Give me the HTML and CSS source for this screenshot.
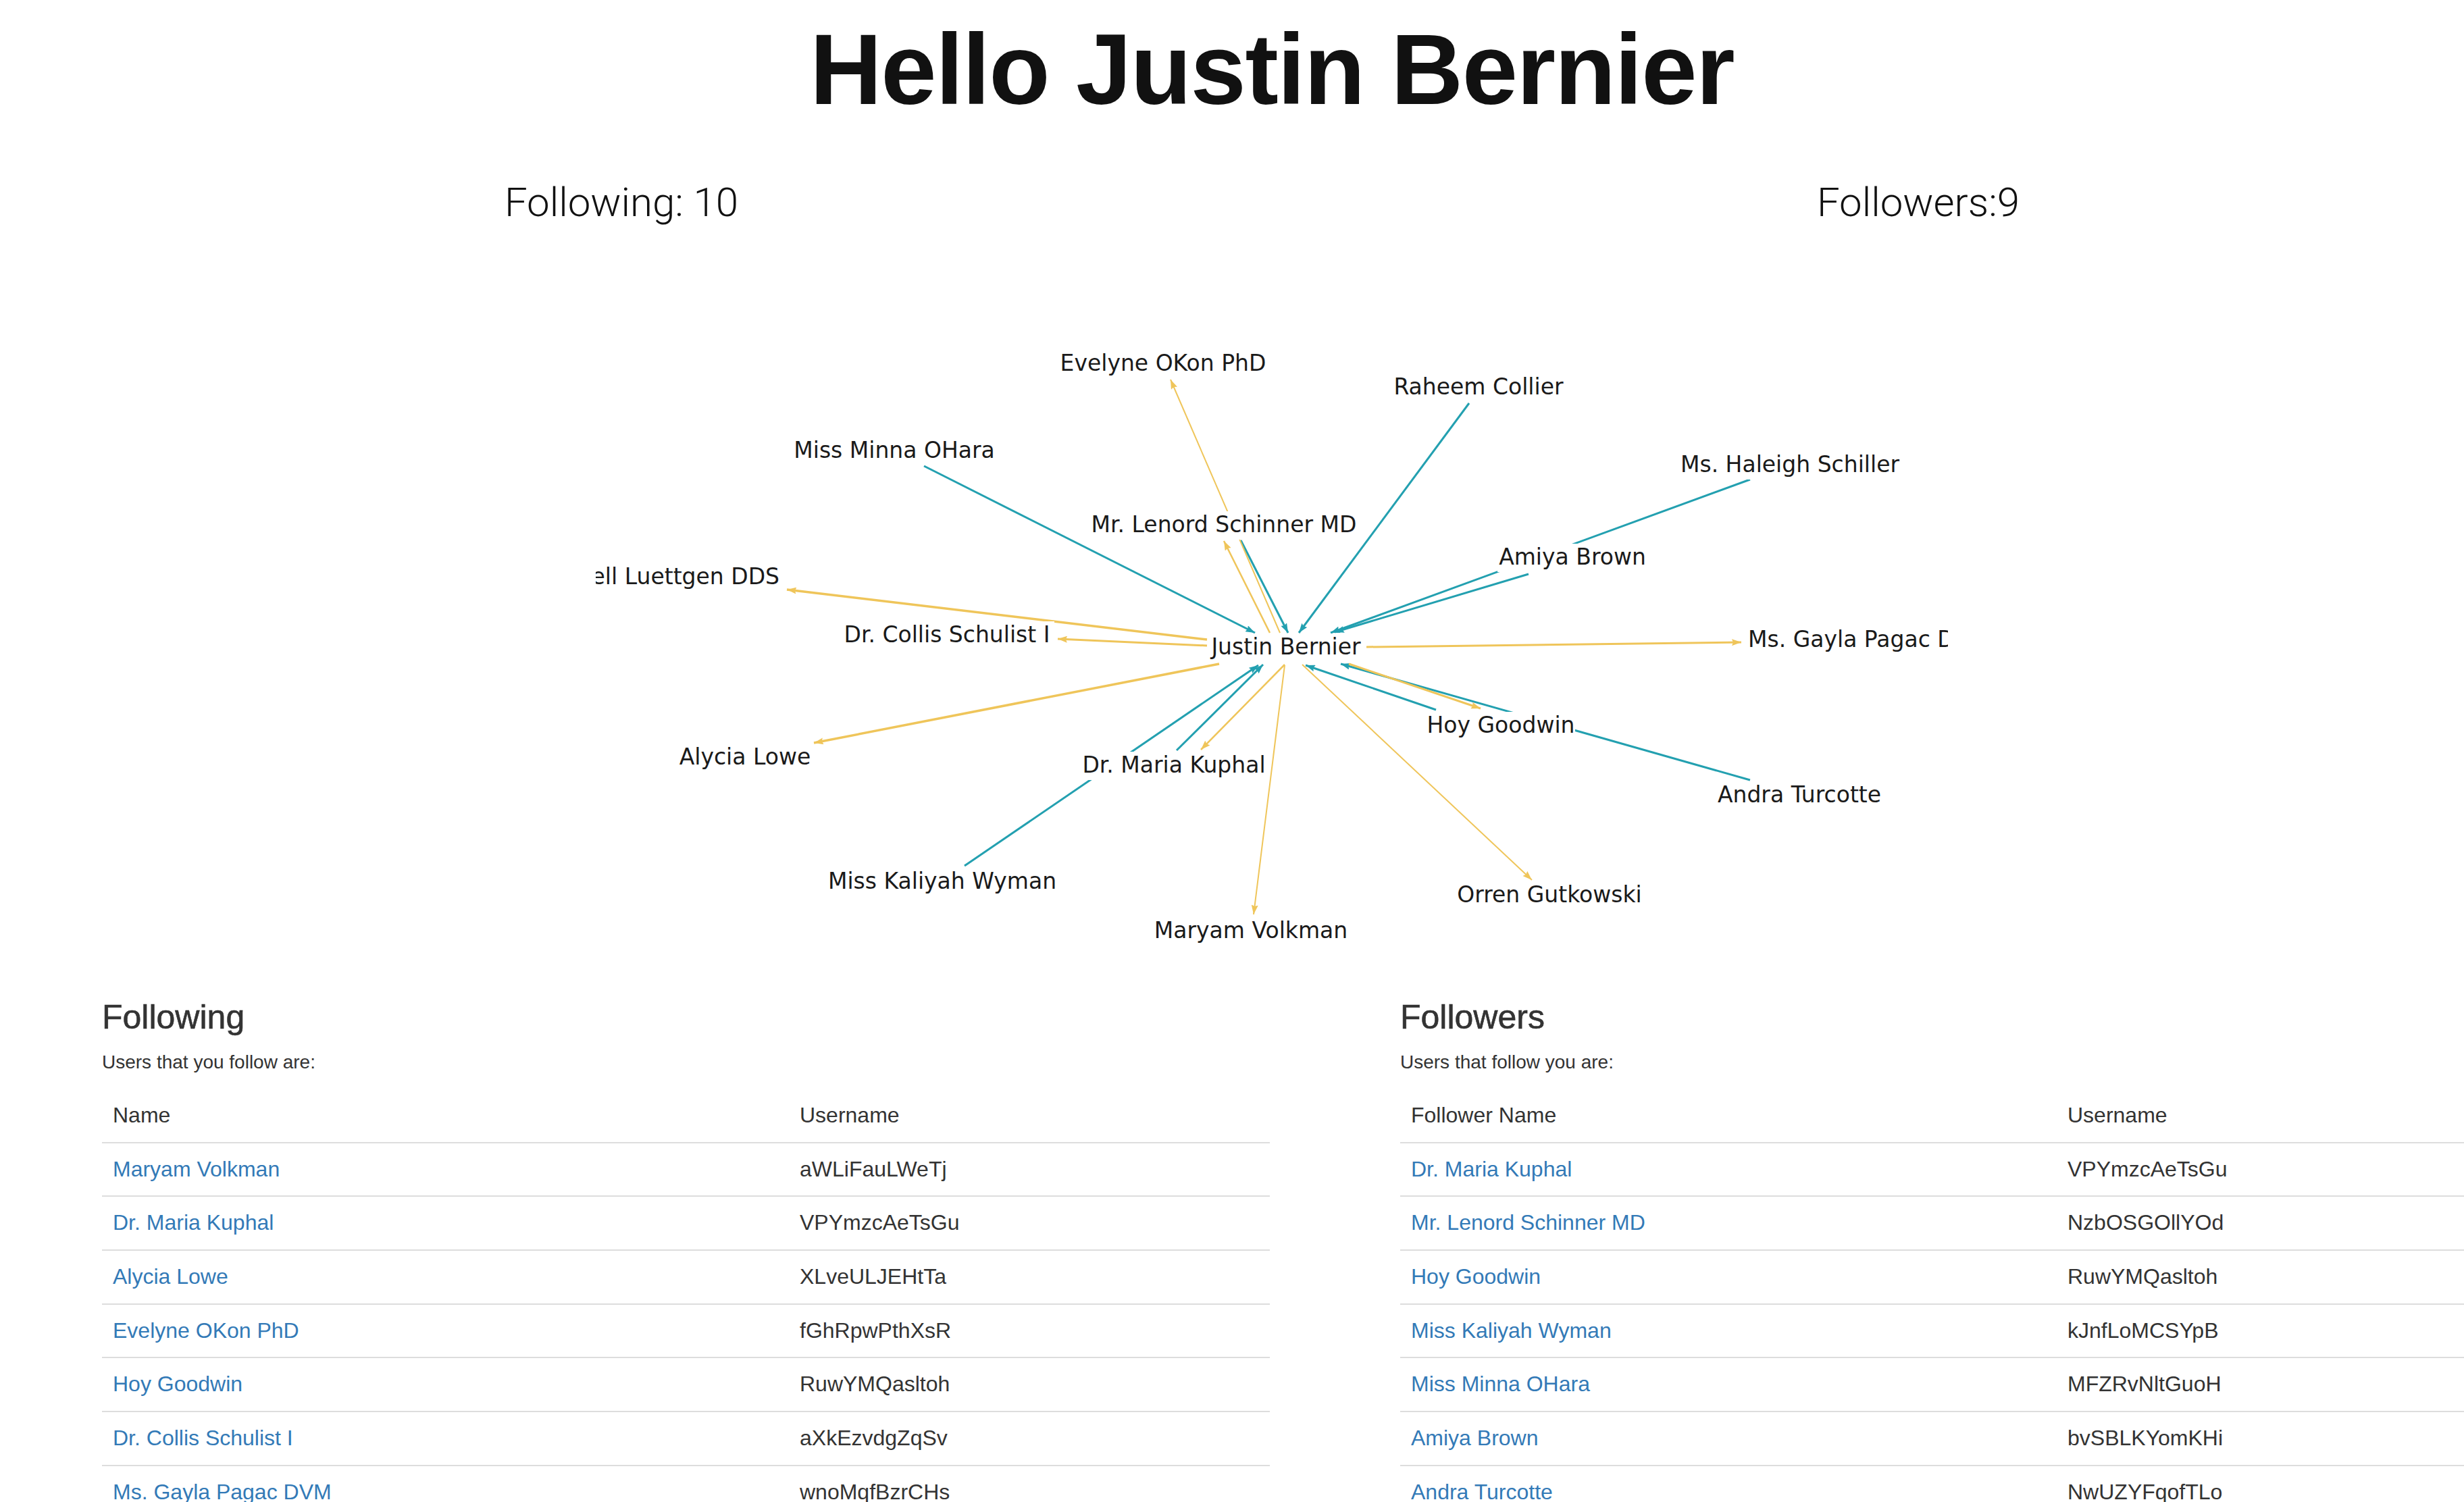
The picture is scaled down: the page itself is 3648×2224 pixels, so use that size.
FILE: index.html
```html
<!DOCTYPE html>
<html>
<head>
<meta charset="utf-8">
<title>Hello Justin Bernier</title>
<link rel="stylesheet" href="styles.css">
</head>
<body>
<h1 class="title">Hello Justin Bernier</h1>

<div class="stats">
  <div class="stat stat-left">Following: 10</div>
  <div class="stat stat-right">Followers:9</div>
</div>

<svg class="graph" width="2002" height="1000" viewBox="0 0 2002 1000" xmlns="http://www.w3.org/2000/svg">
  <defs>
    <marker id="arr-t" viewBox="0 0 14 10" refX="14" refY="5" markerWidth="14" markerHeight="10" markerUnits="userSpaceOnUse" orient="auto">
      <path d="M0,0 L14,5 L0,10 L2,5 z" class="head-t"/>
    </marker>
    <marker id="arr-y" viewBox="0 0 14 10" refX="14" refY="5" markerWidth="14" markerHeight="10" markerUnits="userSpaceOnUse" orient="auto">
      <path d="M0,0 L14,5 L0,10 L2,5 z" class="head-y"/>
    </marker>
  </defs>

  <!-- followers -> Justin (teal) -->
  <g class="edges-t">
    <line x1="486" y1="250" x2="976" y2="497"/>
    <line x1="955" y1="360" x2="1025" y2="497"/>
    <line x1="1293" y1="157" x2="1041" y2="497"/>
    <line x1="1709" y1="270" x2="1088" y2="497"/>
    <line x1="1381" y1="410" x2="1094" y2="496"/>
    <line x1="860" y1="671" x2="988" y2="544"/>
    <line x1="546" y1="842" x2="981" y2="545"/>
    <line x1="1244" y1="611" x2="1051" y2="545"/>
    <line x1="1709" y1="715" x2="1103" y2="543"/>
  </g>

  <!-- Justin -> following (yellow) -->
  <g class="edges-y">
    <line class="w25" x1="998" y1="497" x2="930" y2="361"/>
    <line class="w2" x1="1013" y1="497" x2="851" y2="122"/>
    <line class="w35" x1="905" y1="507" x2="283" y2="433"/>
    <line class="w3" x1="905" y1="516" x2="684" y2="506"/>
    <line class="w3" x1="1141" y1="518" x2="1696" y2="511"/>
    <line class="w35" x1="923" y1="543" x2="323" y2="660"/>
    <line class="w25" x1="1020" y1="544" x2="896" y2="670"/>
    <line class="w2" x1="1020" y1="545" x2="974" y2="914"/>
    <line class="w2" x1="1046" y1="544" x2="1386" y2="863"/>
    <line class="w3" x1="1115" y1="543" x2="1310" y2="609"/>
  </g>

  <!-- label backgrounds -->
  <g class="lbl-bg">
    <rect x="906" y="498" width="234" height="42"/>
    <rect x="685" y="78" width="309" height="42"/>
    <rect x="1181" y="113" width="253" height="42"/>
    <rect x="294" y="207" width="297" height="42"/>
    <rect x="1605" y="228" width="326" height="42"/>
    <rect x="731" y="317" width="399" height="42"/>
    <rect x="1335" y="365" width="221" height="42"/>
    <rect x="362" y="480" width="317" height="42"/>
    <rect x="1700" y="487" width="400" height="42"/>
    <rect x="1229" y="614" width="221" height="42"/>
    <rect x="121" y="661" width="199" height="42"/>
    <rect x="716" y="673" width="280" height="42"/>
    <rect x="1657" y="717" width="250" height="42"/>
    <rect x="344" y="845" width="338" height="42"/>
    <rect x="1273" y="865" width="278" height="42"/>
    <rect x="826" y="918" width="288" height="42"/>
  </g>

  <!-- labels -->
  <g class="lbl">
    <text x="1022" y="529">Justin Bernier</text>
    <text x="840" y="109">Evelyne OKon PhD</text>
    <text x="1307" y="144">Raheem Collier</text>
    <text x="442" y="238">Miss Minna OHara</text>
    <text x="1768" y="259">Ms. Haleigh Schiller</text>
    <text x="930" y="348">Mr. Lenord Schinner MD</text>
    <text x="1446" y="396">Amiya Brown</text>
    <text class="end" x="272" y="425">Ms. Ardell Luettgen DDS</text>
    <text x="520" y="511">Dr. Collis Schulist I</text>
    <text class="start" x="1706" y="518">Ms. Gayla Pagac DVM</text>
    <text x="1340" y="645">Hoy Goodwin</text>
    <text x="221" y="692">Alycia Lowe</text>
    <text x="856" y="704">Dr. Maria Kuphal</text>
    <text x="1782" y="748">Andra Turcotte</text>
    <text x="513" y="876">Miss Kaliyah Wyman</text>
    <text x="1412" y="896">Orren Gutkowski</text>
    <text x="970" y="949">Maryam Volkman</text>
  </g>
</svg>

<div class="lists">
  <section class="list following">
    <h3 class="list-title">Following</h3>
    <p class="list-desc">Users that you follow are:</p>
    <table class="tbl">
      <thead>
        <tr><th class="col-name">Name</th><th>Username</th></tr>
      </thead>
      <tbody>
        <tr><td><a href="#">Maryam Volkman</a></td><td>aWLiFauLWeTj</td></tr>
        <tr><td><a href="#">Dr. Maria Kuphal</a></td><td>VPYmzcAeTsGu</td></tr>
        <tr><td><a href="#">Alycia Lowe</a></td><td>XLveULJEHtTa</td></tr>
        <tr><td><a href="#">Evelyne OKon PhD</a></td><td>fGhRpwPthXsR</td></tr>
        <tr><td><a href="#">Hoy Goodwin</a></td><td>RuwYMQasltoh</td></tr>
        <tr><td><a href="#">Dr. Collis Schulist I</a></td><td>aXkEzvdgZqSv</td></tr>
        <tr><td><a href="#">Ms. Gayla Pagac DVM</a></td><td>wnoMqfBzrCHs</td></tr>
      </tbody>
    </table>
  </section>
  <section class="list followers">
    <h3 class="list-title">Followers</h3>
    <p class="list-desc">Users that follow you are:</p>
    <table class="tbl">
      <thead>
        <tr><th class="col-name">Follower Name</th><th>Username</th></tr>
      </thead>
      <tbody>
        <tr><td><a href="#">Dr. Maria Kuphal</a></td><td>VPYmzcAeTsGu</td></tr>
        <tr><td><a href="#">Mr. Lenord Schinner MD</a></td><td>NzbOSGOllYOd</td></tr>
        <tr><td><a href="#">Hoy Goodwin</a></td><td>RuwYMQasltoh</td></tr>
        <tr><td><a href="#">Miss Kaliyah Wyman</a></td><td>kJnfLoMCSYpB</td></tr>
        <tr><td><a href="#">Miss Minna OHara</a></td><td>MFZRvNltGuoH</td></tr>
        <tr><td><a href="#">Amiya Brown</a></td><td>bvSBLKYomKHi</td></tr>
        <tr><td><a href="#">Andra Turcotte</a></td><td>NwUZYFqofTLo</td></tr>
      </tbody>
    </table>
  </section>
</div>
</body>
</html>
```
FILE: styles.css
```css
html {
  overflow: hidden;
  background: #fff;
}

body {
  margin: 0;
  width: 3766px;
  font-family: "Liberation Sans", Arial, sans-serif;
  color: #333;
  background: #fff;
}

.title {
  margin: 21px 0 0;
  font-family: "Liberation Sans", Arial, sans-serif;
  font-weight: 700;
  font-size: 148px;
  line-height: 163px;
  letter-spacing: -1.5px;
  text-align: center;
  color: #111;
}

.stats {
  display: grid;
  grid-template-columns: 1840px 2000px;
  margin-top: 80px;
  font-family: Roboto, "Liberation Sans", sans-serif;
  font-weight: 300;
  font-size: 60px;
  line-height: 72px;
  color: #111;
}

.stat {
  text-align: center;
}

.graph {
  display: block;
  margin: 104px auto 0;
}

.edges-t line {
  stroke: #23a0b0;
  stroke-width: 3;
  marker-end: url(#arr-t);
}

.edges-y line {
  stroke: #efc55a;
  stroke-width: 2.5;
  marker-end: url(#arr-y);
}

.edges-y .w2 { stroke-width: 2; }
.edges-y .w25 { stroke-width: 2.5; }
.edges-y .w3 { stroke-width: 3; }
.edges-y .w35 { stroke-width: 3.5; }

.head-t { fill: #23a0b0; }
.head-y { fill: #efc55a; }

.lbl-bg rect {
  fill: #fff;
}

.lbl text {
  font-family: "DejaVu Sans", Verdana, sans-serif;
  font-size: 33px;
  fill: #1a1a1a;
  text-anchor: middle;
}

.lbl text.end { text-anchor: end; }
.lbl text.start { text-anchor: start; }

.lists {
  display: grid;
  grid-template-columns: 1729px 1729px;
  column-gap: 193px;
  padding-left: 151px;
}

.list-title {
  margin: 40px 0 20px;
  font-family: "Liberation Sans", Arial, sans-serif;
  font-weight: 500;
  font-size: 50px;
  line-height: 52.8px;
  color: #333;
  -webkit-text-stroke: 0.6px #333;
}

.list-desc {
  margin: 0 0 20px;
  font-size: 28px;
  line-height: 40px;
  color: #333;
}

.tbl {
  width: 100%;
  border-collapse: collapse;
  table-layout: fixed;
  font-size: 32px;
  line-height: 45.7px;
}

.following .col-name { width: 985px; }
.followers .col-name { width: 940px; }

.tbl th {
  padding: 16px;
  text-align: left;
  font-weight: 400;
  color: #333;
  border-bottom: 2px solid #ddd;
}

.tbl td {
  padding: 16px;
  color: #333;
  border-bottom: 2px solid #ddd;
  white-space: nowrap;
}

.tbl a {
  color: #337ab7;
  text-decoration: none;
}
```
